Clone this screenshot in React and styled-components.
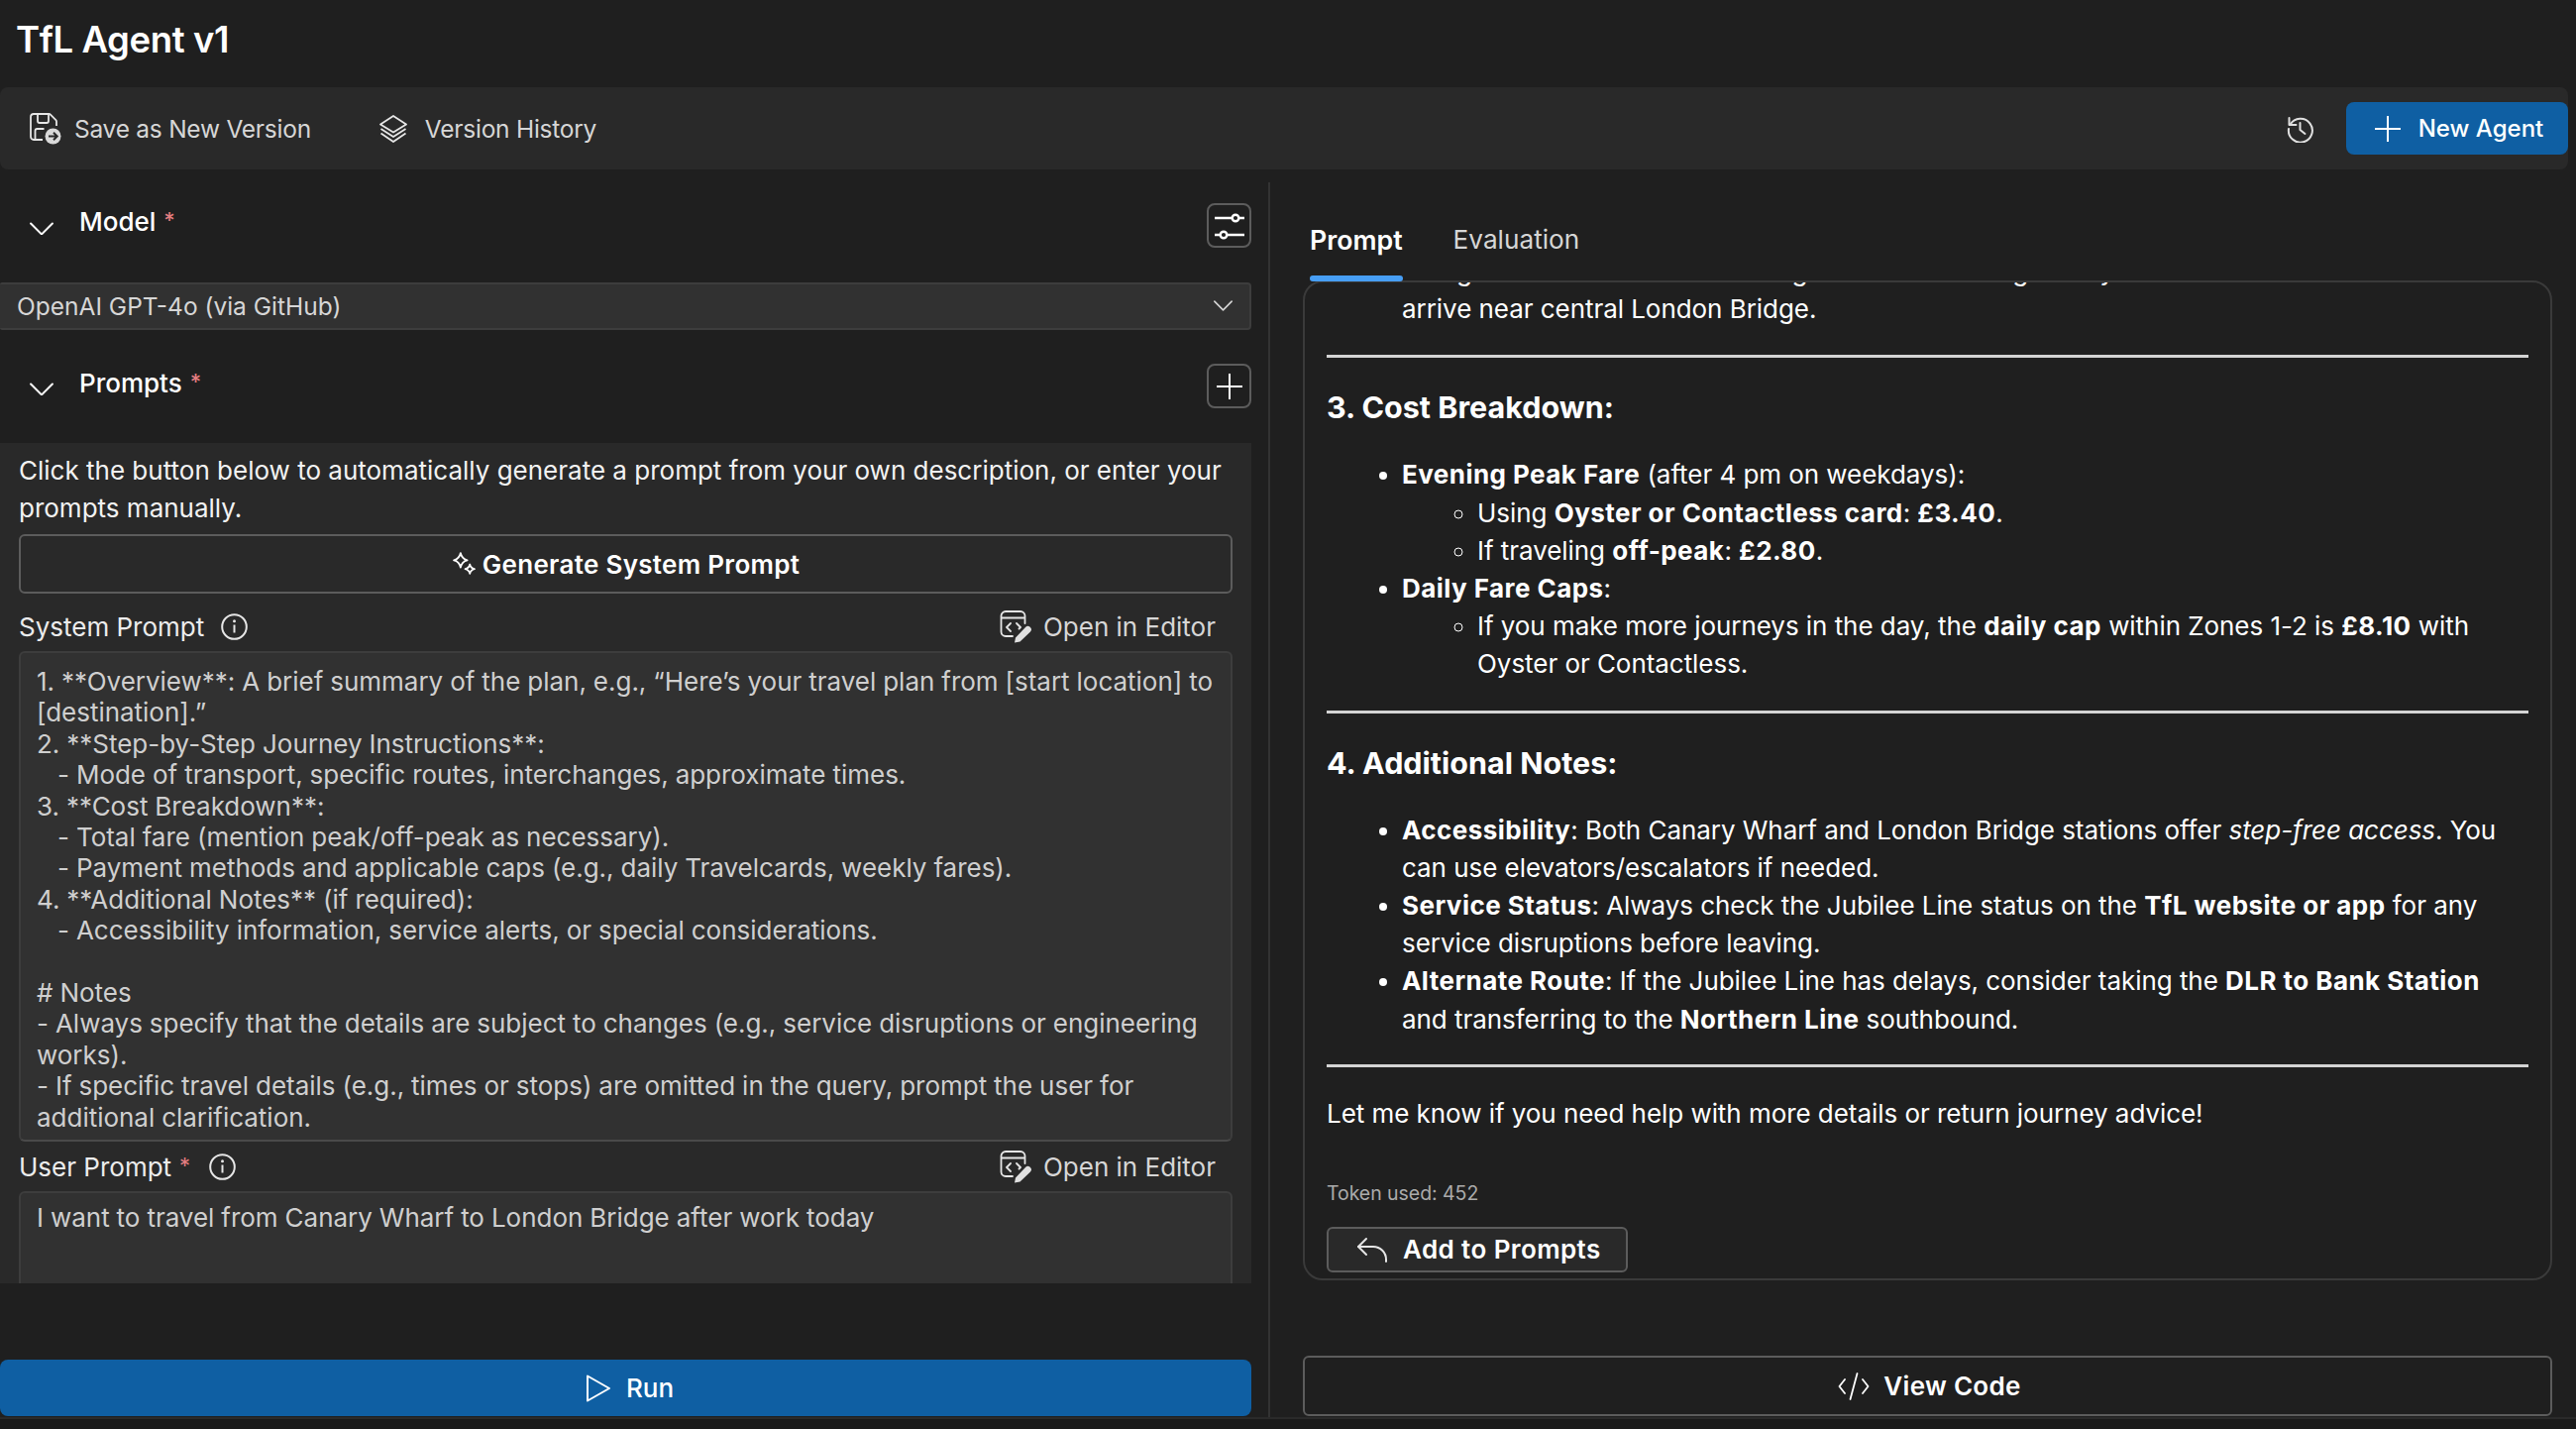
import React from "react";
import styled, { createGlobalStyle } from "styled-components";

const Global = createGlobalStyle`
  html, body { margin: 0; padding: 0; background: #1f1f1f; }
  * { box-sizing: border-box; }
`;

const Page = styled.div`
  width: 2600px;
  height: 1442px;
  overflow: hidden;
  display: flex;
  flex-direction: column;
  background: #1f1f1f;
  color: #fff;
  font-family: Inter, "Liberation Sans", sans-serif;
  font-size: 26px;
  -webkit-font-smoothing: antialiased;
`;
const Title = styled.h1`
  margin: 0;
  height: 88px;
  padding-left: 16px;
  display: flex;
  align-items: center;
  padding-bottom: 8px;
  font-size: 36.5px;
  font-weight: 600;
  letter-spacing: -0.4px;
  flex-shrink: 0;
`;
const Toolbar = styled.div`
  height: 83px;
  margin-right: 8px;
  border-radius: 8px;
  background: #292929;
  display: flex;
  align-items: center;
  padding: 0 0 0 30px;
  flex-shrink: 0;
`;
const ToolItem = styled.div`
  display: flex;
  align-items: center;
  gap: ${(p) => p.$gap || 13}px;
  margin-right: 69px;
  color: #d6d6d6;
  font-size: 24.5px;
  letter-spacing: -0.25px;
`;
const HistoryBtn = styled.div`
  display: flex;
  align-items: center;
  margin-left: auto;
  margin-right: 32px;
  color: #d6d6d6;
`;
const PrimaryBtn = styled.div`
  display: flex;
  align-items: center;
  justify-content: center;
  gap: ${(p) => (p.$wide ? 15 : 18)}px;
  background: #0f5fa3;
  border-radius: 8px;
  color: #fff;
  font-weight: 500;
  font-size: ${(p) => (p.$wide ? 26 : 24)}px;
  width: ${(p) => (p.$wide ? "100%" : "224px")};
  height: ${(p) => (p.$wide ? "57px" : "53px")};
  padding-left: ${(p) => (p.$wide ? 8 : 4)}px;
  flex-shrink: 0;
`;
const Main = styled.div`
  height: 1261px;
  display: flex;
  border-bottom: 2px solid #2a2a2a;
  flex-shrink: 0;
`;
const Left = styled.section`
  width: 1282px;
  margin-top: 13px;
  border-right: 2px solid #333;
  padding: 21px 17px 1px 0;
  display: flex;
  flex-direction: column;
`;
const SectionHead = styled.div`
  height: 45px;
  display: flex;
  align-items: center;
  margin-bottom: 35px;
`;
const Chevron = styled.div`
  width: 80px;
  padding-left: 30px;
  padding-top: 6px;
  display: flex;
  flex-shrink: 0;
`;
const SectionTitle = styled.div`
  font-size: 26px;
  font-weight: 500;
  padding-bottom: ${(p) => p.$pb}px;
  margin-right: auto;
`;
const Star = styled.span`
  color: #e37d80;
  margin-left: 8px;
  font-size: 22px;
  vertical-align: 3px;
`;
const IconButton = styled.div`
  width: 45px;
  height: 45px;
  border: 2px solid #5c5c5c;
  border-radius: 8px;
  display: flex;
  align-items: center;
  justify-content: center;
`;
const Select = styled.div`
  height: 48px;
  margin-bottom: 34px;
  background: #313131;
  border: 2px solid #3d3d3d;
  border-left: 0;
  border-radius: 2px 4px 4px 2px;
  padding: 0 17px 0 17px;
  display: flex;
  align-items: center;
  justify-content: space-between;
  color: #d6d6d6;
  font-size: 24.5px;
`;
const Panel = styled.div`
  height: 848px;
  overflow: hidden;
  background: #292929;
  padding: 9px 19px 0;
  flex-shrink: 0;
`;
const Intro = styled.p`
  margin: 0 0 7px;
  line-height: 38px;
  font-size: 26px;
  color: #f2f2f2;
`;
const OutlineBtn = styled.div`
  height: 60px;
  border: 2px solid #5c5c5c;
  border-radius: 6px;
  display: flex;
  align-items: center;
  justify-content: center;
  gap: 6px;
  font-weight: 600;
  font-size: 26px;
  letter-spacing: 0.3px;
  flex-shrink: 0;
`;
const LabelRow = styled.div`
  height: 48px;
  margin-top: ${(p) => p.$top}px;
  padding: 0 17px 2px 0;
  display: flex;
  align-items: center;
`;
const Label = styled.div`
  display: flex;
  align-items: center;
  font-size: 26px;
  color: #ececec;
  margin-right: auto;
  gap: ${(p) => p.$gap}px;
`;
const EditorLink = styled.div`
  display: flex;
  align-items: center;
  gap: 11px;
  color: #d6d6d6;
  font-size: 26px;
`;
const TextBox = styled.div`
  height: ${(p) => p.$h}px;
  background: #313131;
  border: 2px solid #3d3d3d;
  border-bottom-color: ${(p) => (p.$cut ? "#3d3d3d" : "#4a4a4a")};
  border-radius: 6px;
  padding: ${(p) => p.$pad}px 16px;
  line-height: 31.4px;
  font-size: 26px;
  letter-spacing: -0.02px;
  word-spacing: -0.3px;
  color: #cfcfcf;
  white-space: pre;
  overflow: hidden;
`;
const RunWrap = styled.div`
  margin-top: auto;
`;
const Right = styled.section`
  flex: 1;
  margin-top: 13px;
  padding: 0 24px 1px 33px;
  display: flex;
  flex-direction: column;
`;
const Tabs = styled.div`
  height: 99px;
  padding-left: 7px;
  display: flex;
  gap: 51px;
  flex-shrink: 0;
`;
const Tab = styled.div`
  position: relative;
  height: 100%;
  padding-top: 42px;
  font-size: ${(p) => (p.$active ? 26.7 : 26.2)}px;
  font-weight: ${(p) => (p.$active ? 600 : 400)};
  color: ${(p) => (p.$active ? "#fff" : "#d6d6d6")};
  ${(p) =>
    p.$active &&
    `&::after {
      content: "";
      position: absolute;
      left: 0;
      right: 0;
      bottom: -1px;
      height: 6px;
      border-radius: 3px;
      background: #479ef5;
    }`}
`;
const Card = styled.div`
  height: 1009px;
  border: 2px solid #3a3a3a;
  border-radius: 20px;
  padding: 0 22px 7px 22px;
  overflow: hidden;
  display: flex;
  flex-direction: column;
  font-size: 26px;
  letter-spacing: -0.05px;
  line-height: 38.2px;
  color: #fff;
  flex-shrink: 0;
  b {
    letter-spacing: 0.45px;
  }
`;
const List = styled.ul`
  margin: ${(p) => p.$top || 0}px 0 0;
  padding-left: 76px;
  list-style: ${(p) => (p.$nested ? "circle" : "disc")};
`;
const Rule = styled.hr`
  width: 100%;
  margin: ${(p) => p.$top}px 0 ${(p) => p.$bottom}px;
  border: 0;
  height: 3px;
  background: #d4d4d4;
  flex-shrink: 0;
`;
const Heading = styled.h3`
  margin: 0 0 30px;
  font-size: 30.5px;
  font-weight: 700;
  letter-spacing: 0;
  line-height: 38px;
`;
const Para = styled.p`
  margin: 0;
`;
const Tokens = styled.div`
  margin-top: 49px;
  font-size: 19.5px;
  line-height: 24px;
  color: #ababab;
`;
const AddBtn = styled.div`
  margin-top: 22px;
  width: 304px;
  height: 46px;
  background: #292929;
  border: 2px solid #5c5c5c;
  border-radius: 6px;
  display: flex;
  align-items: center;
  padding-left: 28px;
  gap: 15px;
  font-weight: 600;
  font-size: 26px;
  letter-spacing: 0.4px;
  flex-shrink: 0;
`;
const ViewCode = styled(OutlineBtn)`
  margin-top: auto;
  height: 61px;
  background: #1f1f1f;
  gap: 14px;
  padding-left: 4px;
`;
const BottomStrip = styled.div`
  flex: 1;
  background: #1a1a1a;
`;

const SaveIcon = () => (
  <svg width="32" height="32" viewBox="0 0 32 32" fill="none" stroke="#e6e6e6" strokeWidth="1.8">
    <path d="M13 27H4a3 3 0 0 1-3-3V4a3 3 0 0 1 3-3h15.5a2 2 0 0 1 1.4.6l5.5 5.5a2 2 0 0 1 .6 1.4V13" />
    <path d="M8 1.500v6.500a2 2 0 0 0 2 2h7a2 2 0 0 0 2-2V1.500" />
    <path d="M5.500 27v-9a2 2 0 0 1 2-2h7" />
    <circle cx="23.5" cy="23.5" r="8" fill="#d9d9d9" stroke="none" />
    <path d="M19 23.500h8.500M24 19.800l3.700 3.700-3.700 3.700" stroke="#292929" strokeWidth="2" />
  </svg>
);
const LayersIcon = () => (
  <svg width="28" height="28" viewBox="0 0 28 28" fill="none" stroke="#e6e6e6" strokeWidth="1.8" strokeLinejoin="round">
    <path d="M14 1 27 9.500 14 17.500 1 9.500Z" />
    <path d="M1.500 14 14 22 26.500 14" />
    <path d="M1.500 18.500 14 27 26.500 18.500" />
  </svg>
);
const HistoryIcon = () => (
  <svg width="28" height="28" viewBox="0 0 28 28" fill="none" stroke="#e0e0e0" strokeWidth="2" strokeLinecap="round" strokeLinejoin="round">
    <path d="M3.600 9.500A12 12 0 1 1 2 14" />
    <path d="M2.500 3v7h7" />
    <path d="M13.500 8v7l5 4" />
  </svg>
);
const PlusIcon = ({ size = 26, width = 2 }) => (
  <svg width={size} height={size} viewBox="0 0 26 26" stroke="#fff" strokeWidth={width} fill="none">
    <path d="M13 0v26M0 13h26" />
  </svg>
);
const ChevronIcon = ({ w = 24, color = "#fff" }) => (
  <svg width={w} height={w * 0.58} viewBox="0 0 24 14" fill="none" stroke={color} strokeWidth="2" strokeLinecap="round" strokeLinejoin="round">
    <path d="M1 1.500 12 12.500 23 1.500" />
  </svg>
);
const SlidersIcon = () => (
  <svg width="32" height="32" viewBox="0 0 32 32" fill="none" stroke="#fff" strokeWidth="2.4">
    <path d="M1 8h18M25 8h6M1 25h6M13 25h18" />
    <circle cx="22" cy="8" r="3.300" />
    <circle cx="10" cy="25" r="3.300" />
  </svg>
);
const InfoIcon = () => (
  <svg width="27" height="27" viewBox="0 0 27 27" fill="none" stroke="#e6e6e6" strokeWidth="2">
    <circle cx="13.500" cy="13.500" r="12.300" />
    <path d="M13.500 11.500v8" />
    <circle cx="13.500" cy="7.800" r="1.500" fill="#e6e6e6" stroke="none" />
  </svg>
);
const EditorIcon = () => (
  <svg width="33" height="33" viewBox="0 0 33 33" fill="none" stroke="#e6e6e6" strokeWidth="1.8" strokeLinecap="round" strokeLinejoin="round">
    <path d="M13 26H6a4.500 4.500 0 0 1-4.500-4.500v-16A4.500 4.500 0 0 1 6 1h15a4.500 4.500 0 0 1 4.500 4.500V13" />
    <path d="M2 7.500h23" />
    <path d="M11 13l-4 4 4 4M17 13l4 4-1.500 1.500" />
    <path d="M16 27.500 26 17a3.300 3.300 0 0 1 5 4.400L20.500 31.500 15 32.500Z" fill="#e0e0e0" stroke="none" />
  </svg>
);
const SparkleIcon = () => (
  <svg width="25" height="25" viewBox="0 0 24 24" fill="none" stroke="#fff" strokeWidth="1.7" strokeLinejoin="round">
    <path d="M8.500 1c.8 4 2.400 6 6.500 7-4.100 1-5.700 3-6.500 7-.8-4-2.400-6-6.500-7 4.100-1 5.700-3 6.500-7Z" />
    <path d="M17.500 12c.5 2.500 1.600 3.700 4.500 4.500-2.900.8-4 2-4.500 4.500-.5-2.500-1.600-3.700-4.500-4.500 2.900-.8 4-2 4.500-4.500Z" />
  </svg>
);
const ReplyIcon = () => (
  <svg width="32" height="26" viewBox="0 0 32 26" fill="none" stroke="#e6e6e6" strokeWidth="2" strokeLinecap="round" strokeLinejoin="round">
    <path d="M10 2 2 10l8 8" />
    <path d="M2 10h15a13 13 0 0 1 13 13v2" />
  </svg>
);
const RunIcon = () => (
  <svg width="26" height="28" viewBox="0 0 26 28" fill="none" stroke="#fff" strokeWidth="2" strokeLinejoin="round">
    <path d="M2 1.500 24 14 2 26.500Z" />
  </svg>
);
const CodeIcon = () => (
  <svg width="32" height="28" viewBox="0 0 32 28" fill="none" stroke="#fff" strokeWidth="1.8" strokeLinecap="round" strokeLinejoin="round">
    <path d="M7 7 1.500 14 7 21M25 7l5.500 7L25 21M19.500 1 12.500 27" />
  </svg>
);

const SYSTEM_PROMPT = `1. **Overview**: A brief summary of the plan, e.g., “Here’s your travel plan from [start location] to
[destination].”
2. **Step-by-Step Journey Instructions**:
   - Mode of transport, specific routes, interchanges, approximate times.
3. **Cost Breakdown**:
   - Total fare (mention peak/off-peak as necessary).
   - Payment methods and applicable caps (e.g., daily Travelcards, weekly fares).
4. **Additional Notes** (if required):
   - Accessibility information, service alerts, or special considerations.

# Notes
- Always specify that the details are subject to changes (e.g., service disruptions or engineering
works).
- If specific travel details (e.g., times or stops) are omitted in the query, prompt the user for
additional clarification.`;

export default function App() {
  return (
    <Page>
      <Global />
      <Title>TfL Agent v1</Title>
      <Toolbar>
        <ToolItem>
          <SaveIcon />
          Save as New Version
        </ToolItem>
        <ToolItem $gap={18}>
          <LayersIcon />
          Version History
        </ToolItem>
        <HistoryBtn>
          <HistoryIcon />
        </HistoryBtn>
        <PrimaryBtn>
          <PlusIcon />
          New Agent
        </PrimaryBtn>
      </Toolbar>
      <Main>
        <Left>
          <SectionHead>
            <Chevron>
              <ChevronIcon />
            </Chevron>
            <SectionTitle $pb={8}>
              Model<Star>*</Star>
            </SectionTitle>
            <IconButton>
              <SlidersIcon />
            </IconButton>
          </SectionHead>
          <Select>
            OpenAI GPT-4o (via GitHub)
            <ChevronIcon w={19} color="#d6d6d6" />
          </Select>
          <SectionHead>
            <Chevron>
              <ChevronIcon />
            </Chevron>
            <SectionTitle $pb={6}>
              Prompts<Star>*</Star>
            </SectionTitle>
            <IconButton>
              <PlusIcon />
            </IconButton>
          </SectionHead>
          <Panel>
            <Intro>
              Click the button below to automatically generate a prompt from your own description, or enter your
              prompts manually.
            </Intro>
            <OutlineBtn>
              <SparkleIcon />
              Generate System Prompt
            </OutlineBtn>
            <LabelRow $top={10}>
              <Label $gap={17}>
                System Prompt
                <InfoIcon />
              </Label>
              <EditorLink>
                <EditorIcon />
                Open in Editor
              </EditorLink>
            </LabelRow>
            <TextBox $h={495} $pad={13}>{SYSTEM_PROMPT}</TextBox>
            <LabelRow $top={2}>
              <Label $gap={19}>
                <span>
                  User Prompt<Star>*</Star>
                </span>
                <InfoIcon />
              </Label>
              <EditorLink>
                <EditorIcon />
                Open in Editor
              </EditorLink>
            </LabelRow>
            <TextBox $h={140} $pad={9} $cut>
              I want to travel from Canary Wharf to London Bridge after work today
            </TextBox>
          </Panel>
          <RunWrap>
            <PrimaryBtn $wide>
              <RunIcon />
              Run
            </PrimaryBtn>
          </RunWrap>
        </Left>
        <Right>
          <Tabs>
            <Tab $active>Prompt</Tab>
            <Tab>Evaluation</Tab>
          </Tabs>
          <Card>
            <List $top={-30}>
              <li>
                Along the line it takes a while to get out where the gate is you will
                <br />
                arrive near central London Bridge.
              </li>
            </List>
            <Rule $top={27} $bottom={31} />
            <Heading>3. Cost Breakdown:</Heading>
            <List>
              <li>
                <b>Evening Peak Fare</b> (after 4 pm on weekdays):
                <List $nested>
                  <li>
                    Using <b>Oyster or Contactless card</b>: <b>£3.40</b>.
                  </li>
                  <li>
                    If traveling <b>off-peak</b>: <b>£2.80</b>.
                  </li>
                </List>
              </li>
              <li>
                <b>Daily Fare Caps</b>:
                <List $nested>
                  <li>
                    If you make more journeys in the day, the <b>daily cap</b> within Zones 1-2 is <b>£8.10</b> with
                    <br />
                    Oyster or Contactless.
                  </li>
                </List>
              </li>
            </List>
            <Rule $top={27} $bottom={31} />
            <Heading>4. Additional Notes:</Heading>
            <List>
              <li>
                <b>Accessibility</b>: Both Canary Wharf and London Bridge stations offer <i>step-free access</i>. You
                <br />
                can use elevators/escalators if needed.
              </li>
              <li>
                <b>Service Status</b>: Always check the Jubilee Line status on the <b>TfL website or app</b> for any
                <br />
                service disruptions before leaving.
              </li>
              <li>
                <b>Alternate Route</b>: If the Jubilee Line has delays, consider taking the <b>DLR to Bank Station</b>
                <br />
                and transferring to the <b>Northern Line</b> southbound.
              </li>
            </List>
            <Rule $top={26} $bottom={28} />
            <Para>Let me know if you need help with more details or return journey advice!</Para>
            <Tokens>Token used: 452</Tokens>
            <AddBtn>
              <ReplyIcon />
              Add to Prompts
            </AddBtn>
          </Card>
          <ViewCode>
            <CodeIcon />
            View Code
          </ViewCode>
        </Right>
      </Main>
      <BottomStrip />
    </Page>
  );
}
